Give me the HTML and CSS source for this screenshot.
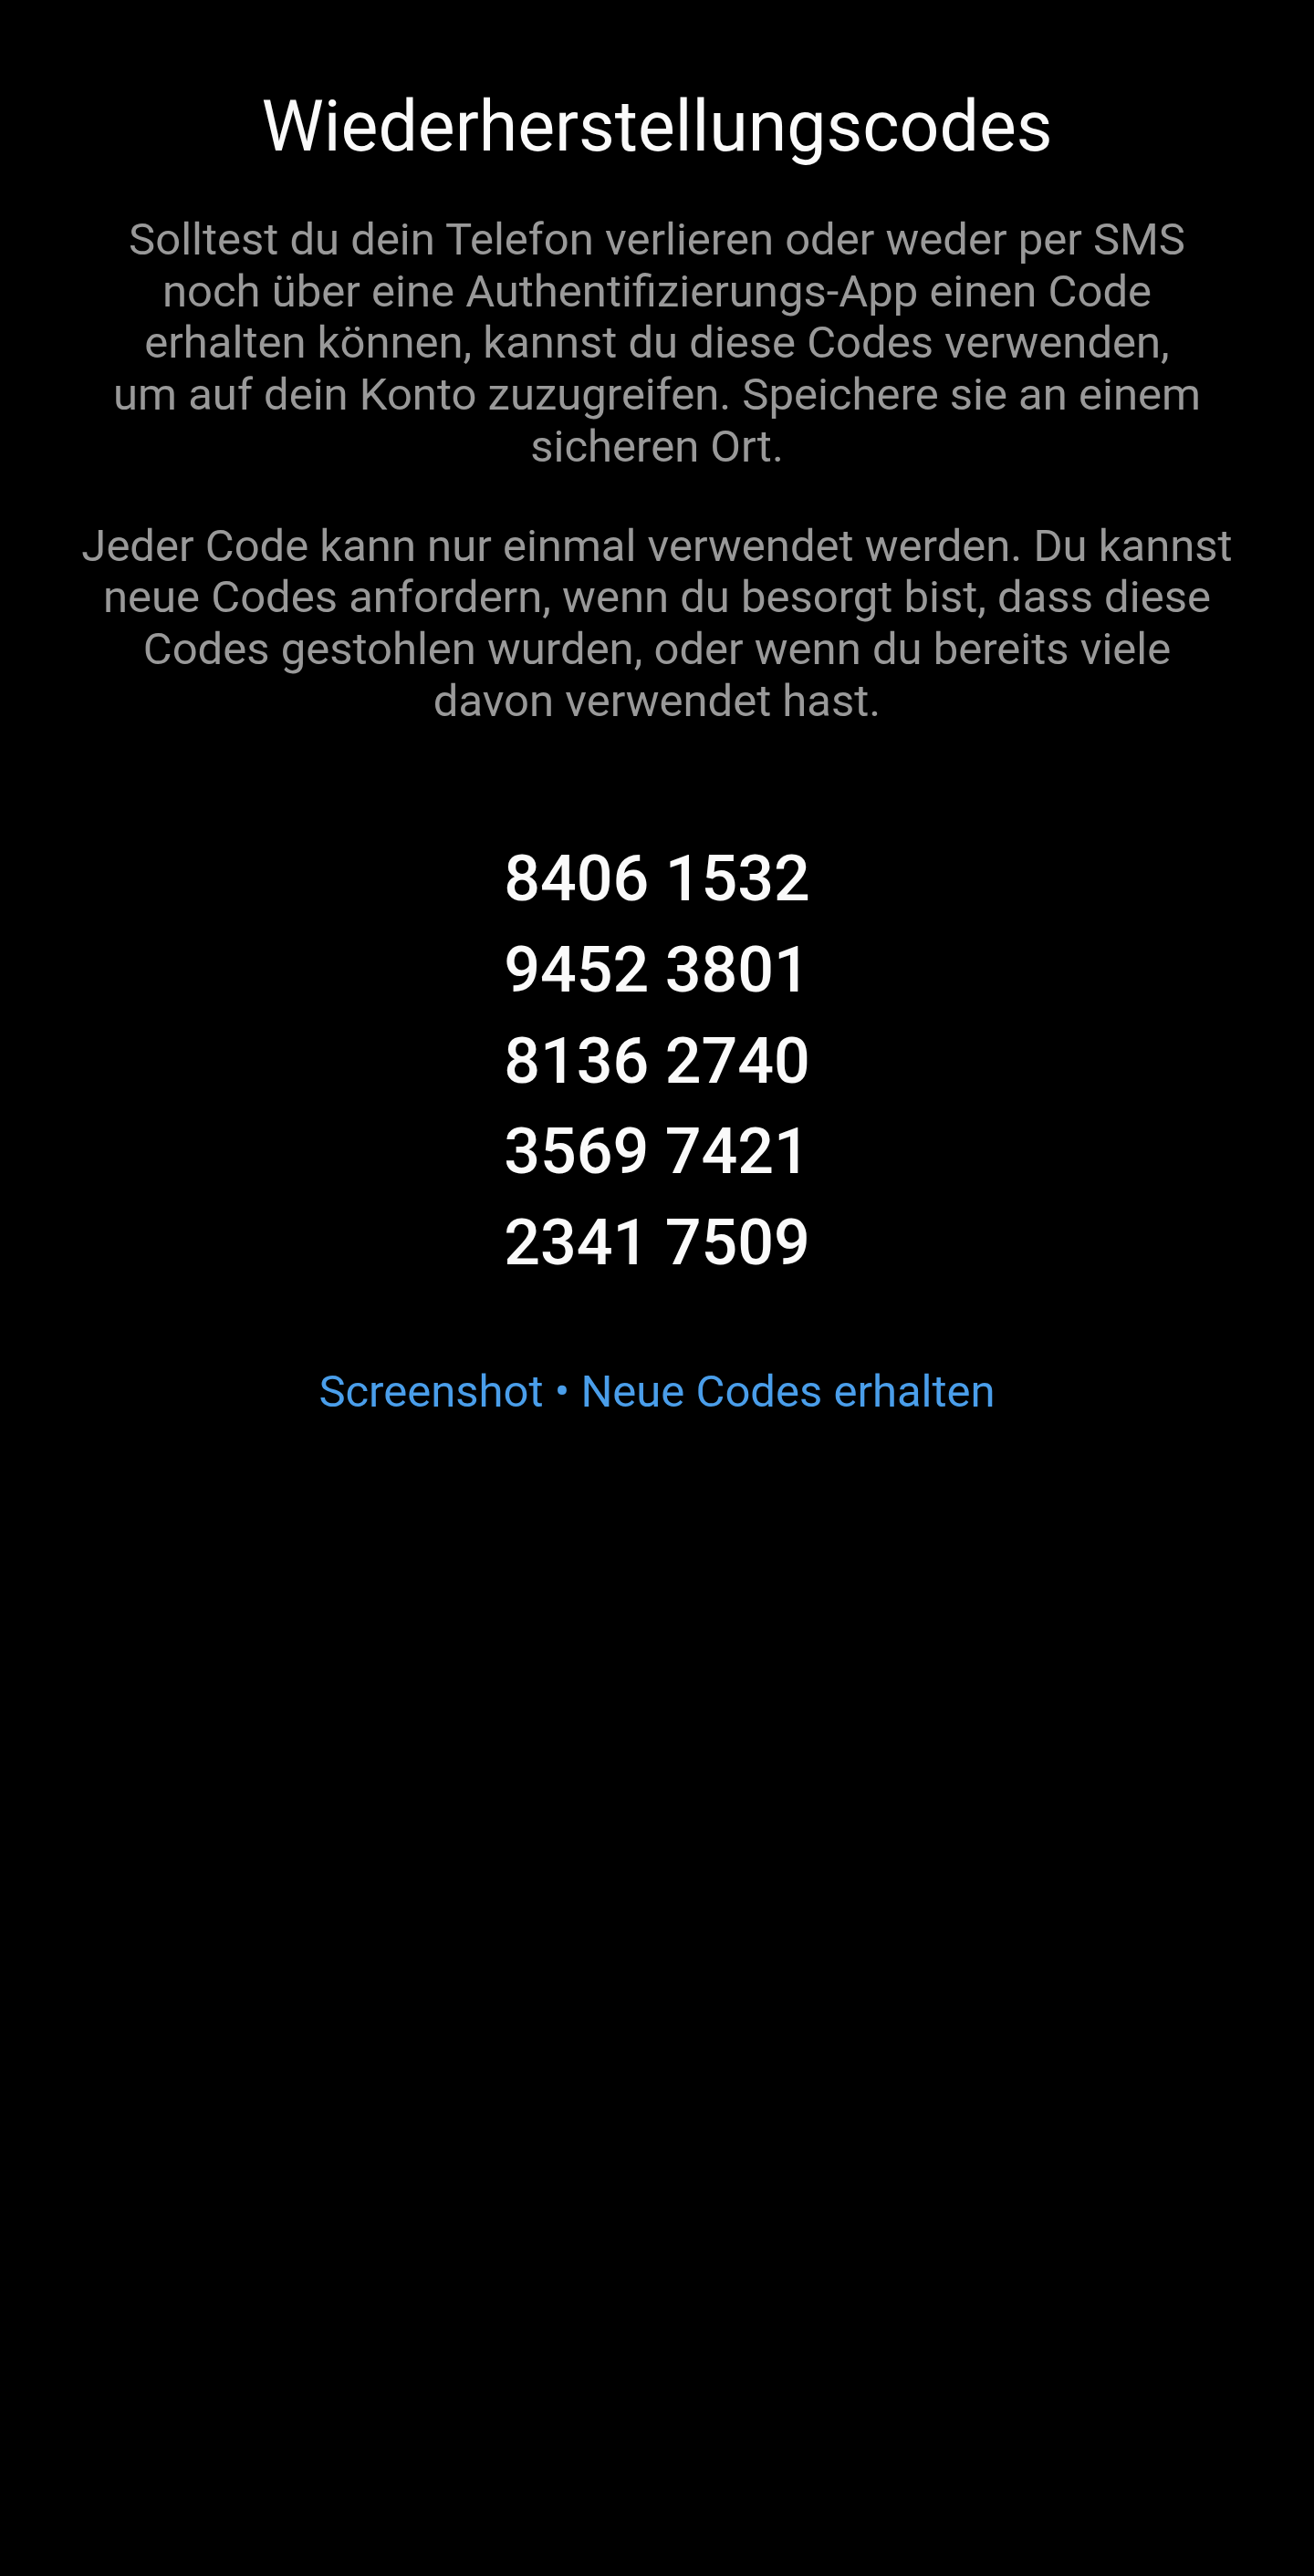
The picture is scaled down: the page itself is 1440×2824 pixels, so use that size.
FILE: index.html
```html
<!DOCTYPE html>
<html lang="de">
<head>
<meta charset="utf-8">
<title>Wiederherstellungscodes</title>
<link rel="stylesheet" href="styles.css">
</head>
<body>
<main class="page">
  <h1 class="title">Wiederherstellungscodes</h1>
  <p class="text">Solltest du dein Telefon verlieren oder weder per SMS<br>noch über eine Authentifizierungs-App einen Code<br>erhalten können, kannst du diese Codes verwenden,<br>um auf dein Konto zuzugreifen. Speichere sie an einem<br>sicheren Ort.</p>
  <p class="text">Jeder Code kann nur einmal verwendet werden. Du kannst<br>neue Codes anfordern, wenn du besorgt bist, dass diese<br>Codes gestohlen wurden, oder wenn du bereits viele<br>davon verwendet hast.</p>
  <ul class="codes">
    <li>8406 1532</li>
    <li>9452 3801</li>
    <li>8136 2740</li>
    <li>3569 7421</li>
    <li>2341 7509</li>
  </ul>
  <p class="links"><a class="link" href="#">Screenshot</a> • <a class="link" href="#">Neue Codes erhalten</a></p>
</main>
</body>
</html>
```
FILE: styles.css
```css
html, body {
  margin: 0;
  padding: 0;
  background: #000;
}
body {
  min-height: 2824px;
  font-family: Roboto, "Noto Sans", "Liberation Sans", sans-serif;
  color: #fff;
}
.page {
  display: flex;
  flex-direction: column;
  align-items: center;
  padding: 94px 60px 0;
  text-align: center;
}
.title {
  margin: 0;
  font-size: 77px;
  font-weight: 400;
  line-height: 90px;
  color: #fafafa;
}
.text {
  margin: 51px 0 0;
  font-size: 49px;
  line-height: 56.7px;
  color: #999999;
}
.text + .text {
  margin-top: 52px;
}
.codes {
  list-style: none;
  margin: 117px 0 0;
  padding: 0;
  font-size: 70px;
  font-weight: 500;
  line-height: 99.7px;
  color: #fafafa;
}
.links {
  margin: 85px 0 0;
  font-size: 49px;
  line-height: 56.7px;
  color: #4a9eea;
}
.link {
  color: #4a9eea;
  text-decoration: none;
}
```
